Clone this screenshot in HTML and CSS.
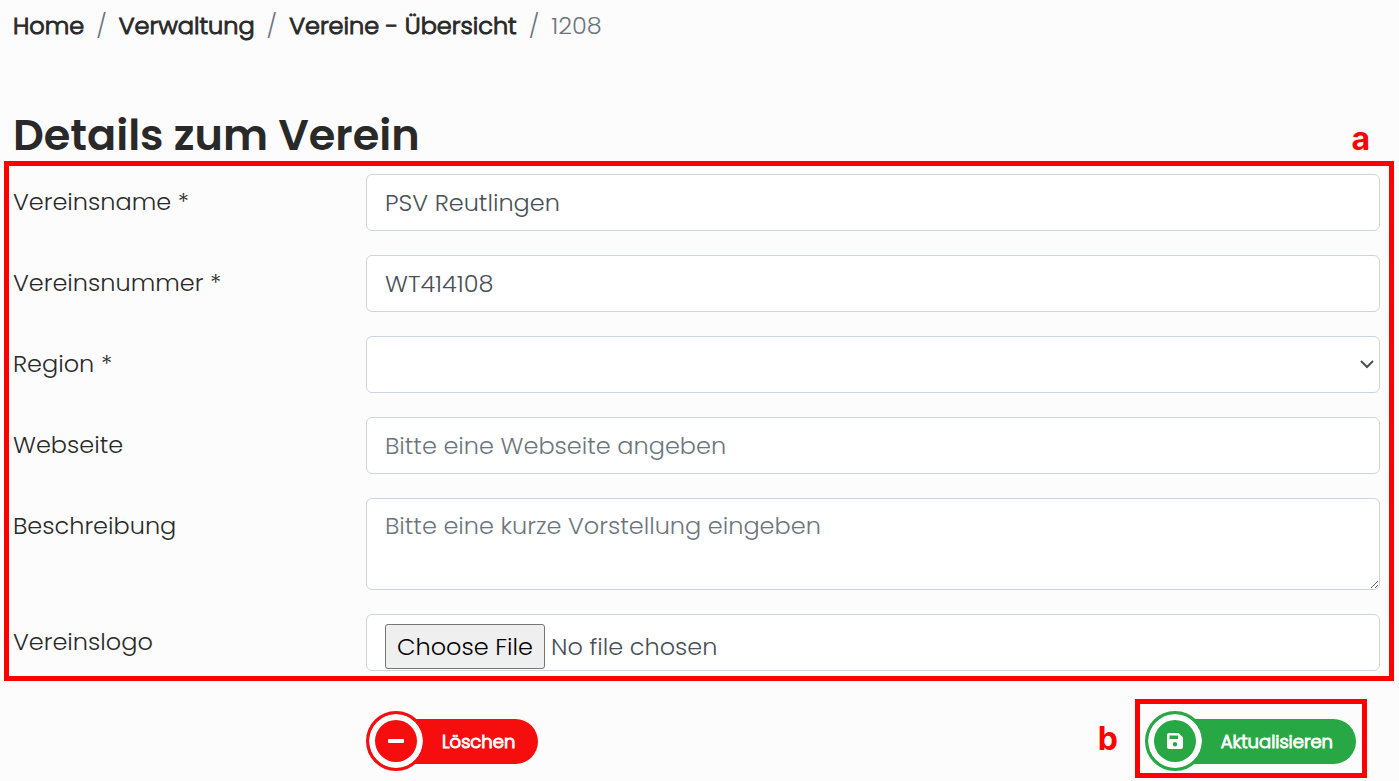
FILE: index.html
```html
<!DOCTYPE html>
<html lang="de">
<head>
  <meta charset="UTF-8" />
  <meta name="viewport" content="width=device-width, initial-scale=1.0" />
  <title>Details zum Verein</title>
  <link rel="stylesheet" href="styles.css">
</head>
<body>
  <nav>
    <ol class="breadcrumb">
      <li><a href="#">Home</a></li>
      <li><a href="#">Verwaltung</a></li>
      <li><a href="#">Vereine - Übersicht</a></li>
      <li class="active">1208</li>
    </ol>
  </nav>

  <main>
    <header class="title-row">
      <h1>Details zum Verein</h1>
      <span class="marker">a</span>
    </header>

    <form>
      <div class="frame details">
        <div class="form-row">
          <label for="name">Vereinsname *</label>
          <input class="form-control" type="text" id="name" value="PSV Reutlingen" />
        </div>
        <div class="form-row">
          <label for="number">Vereinsnummer *</label>
          <input class="form-control" type="text" id="number" value="WT414108" />
        </div>
        <div class="form-row">
          <label for="region">Region *</label>
          <div class="select-wrap">
            <select class="form-control" id="region"><option></option></select>
            <svg class="chevron" width="14" height="9" viewBox="0 0 14 9"><path d="M1 1L7 7L13 1" /></svg>
          </div>
        </div>
        <div class="form-row">
          <label for="website">Webseite</label>
          <input class="form-control" type="text" id="website" placeholder="Bitte eine Webseite angeben" />
        </div>
        <div class="form-row">
          <label for="description">Beschreibung</label>
          <textarea class="form-control" id="description" rows="2" placeholder="Bitte eine kurze Vorstellung eingeben"></textarea>
        </div>
        <div class="form-row">
          <label for="logo">Vereinslogo</label>
          <input class="form-control" type="file" id="logo" />
        </div>
      </div>

      <div class="form-row actions">
        <div class="buttons">
          <button type="button" class="btn btn-delete">
            <span class="btn-icon">
              <svg width="16" height="16" viewBox="0 0 16 16"><rect x="0" y="6" width="16" height="4" rx="1" /></svg>
            </span>
            <span class="btn-text">Löschen</span>
          </button>
          <div class="save">
            <span class="marker">b</span>
            <div class="frame save-frame">
              <button type="submit" class="btn btn-save">
                <span class="btn-icon">
                  <svg width="16" height="16" viewBox="0 0 16 16"><path fill-rule="evenodd" d="M2 0H11.500L16 4.500V14A2 2 0 0 1 14 16H2A2 2 0 0 1 0 14V2A2 2 0 0 1 2 0ZM2.500 2.500V6H11V2.500ZM8 9A2.200 2.200 0 1 0 8 13.400A2.200 2.200 0 1 0 8 9Z" /></svg>
                </span>
                <span class="btn-text">Aktualisieren</span>
              </button>
            </div>
          </div>
        </div>
      </div>
    </form>
  </main>
</body>
</html>
```
FILE: styles.css
```css
* {
  box-sizing: border-box;
}

body {
  margin: 0;
  padding: 8px 5px 3px 4px;
  font-family: Poppins, Inter, sans-serif;
  font-size: 24px;
  font-weight: 300;
  line-height: 36px;
  background: #fcfcfc;
  color: #292929;
}

.breadcrumb {
  display: flex;
  margin: 0;
  padding: 0 9px;
  list-style: none;
}

.breadcrumb li + li::before {
  content: "/";
  padding: 0 12px;
  color: #6c757d;
}

.breadcrumb a {
  color: #292929;
  text-decoration: none;
  -webkit-text-stroke: 1px;
}

.breadcrumb .active {
  color: #6c757d;
}

.title-row {
  display: flex;
  justify-content: space-between;
  align-items: baseline;
  margin-top: 65px;
  padding: 0 24px 0 9px;
}

h1 {
  margin: 0;
  font-size: 43px;
  font-weight: 600;
  line-height: 52px;
}

.marker {
  font-family: Inter, sans-serif;
  font-size: 32px;
  font-weight: 700;
  color: #f00;
}

.frame {
  border: 5px solid #f00;
}

.details {
  display: grid;
  gap: 24px;
  padding: 8px 9px 5px 4px;
}

.form-row {
  display: grid;
  grid-template-columns: 1fr 3fr;
  column-gap: 15px;
  align-items: start;
}

.form-row label {
  padding-top: 10px;
}

.form-control {
  display: block;
  width: 100%;
  height: 57px;
  padding: 9px 18px;
  font: inherit;
  color: #495057;
  background: white;
  border: 1px solid #ced4da;
  border-radius: 6px;
}

.form-control::placeholder {
  color: #6c757d;
  opacity: 1;
}

.select-wrap {
  position: relative;
}

select.form-control {
  appearance: none;
}

.chevron {
  position: absolute;
  top: 24px;
  right: 6px;
  fill: none;
  stroke: #495057;
  stroke-width: 2;
  pointer-events: none;
}

textarea.form-control {
  height: auto;
  resize: vertical;
}

.form-control::file-selector-button {
  height: 45px;
  margin-right: 6px;
  padding: 0 11px;
  font: inherit;
  color: black;
  background: #efefef;
  border: 1px solid #767676;
  border-radius: 3px;
}

.actions {
  margin-top: 18px;
  padding: 0 14px 0 9px;
}

.buttons {
  grid-column: 2;
  display: flex;
  justify-content: space-between;
  align-items: flex-start;
}

.btn {
  display: flex;
  align-items: center;
  padding: 0;
  border: none;
  font: inherit;
  font-size: 18px;
  color: white;
  background: none;
  cursor: pointer;
}

.btn-delete {
  --btn-color: #f60e0e;
  margin-top: 12px;
}

.btn-save {
  --btn-color: #28a745;
}

/* white ring sits inside the coloured one */
.btn-icon {
  position: relative;
  display: flex;
  align-items: center;
  justify-content: center;
  width: 60px;
  height: 60px;
  background: var(--btn-color);
  border: 3px solid var(--btn-color);
  border-radius: 50%;
  box-shadow: inset 0 0 0 6px white;
}

.btn-icon svg {
  fill: white;
}

.btn-text {
  height: 45px;
  margin-left: -30px;
  padding: 0 23px 0 46px;
  line-height: 45px;
  -webkit-text-stroke: 1px;
  background: var(--btn-color);
  border-radius: 0 23px 23px 0;
}

.save {
  display: flex;
  align-items: center;
  gap: 17px;
  margin-right: 13px;
}

.save-frame {
  padding: 7px 6px 2px 5px;
}
```
